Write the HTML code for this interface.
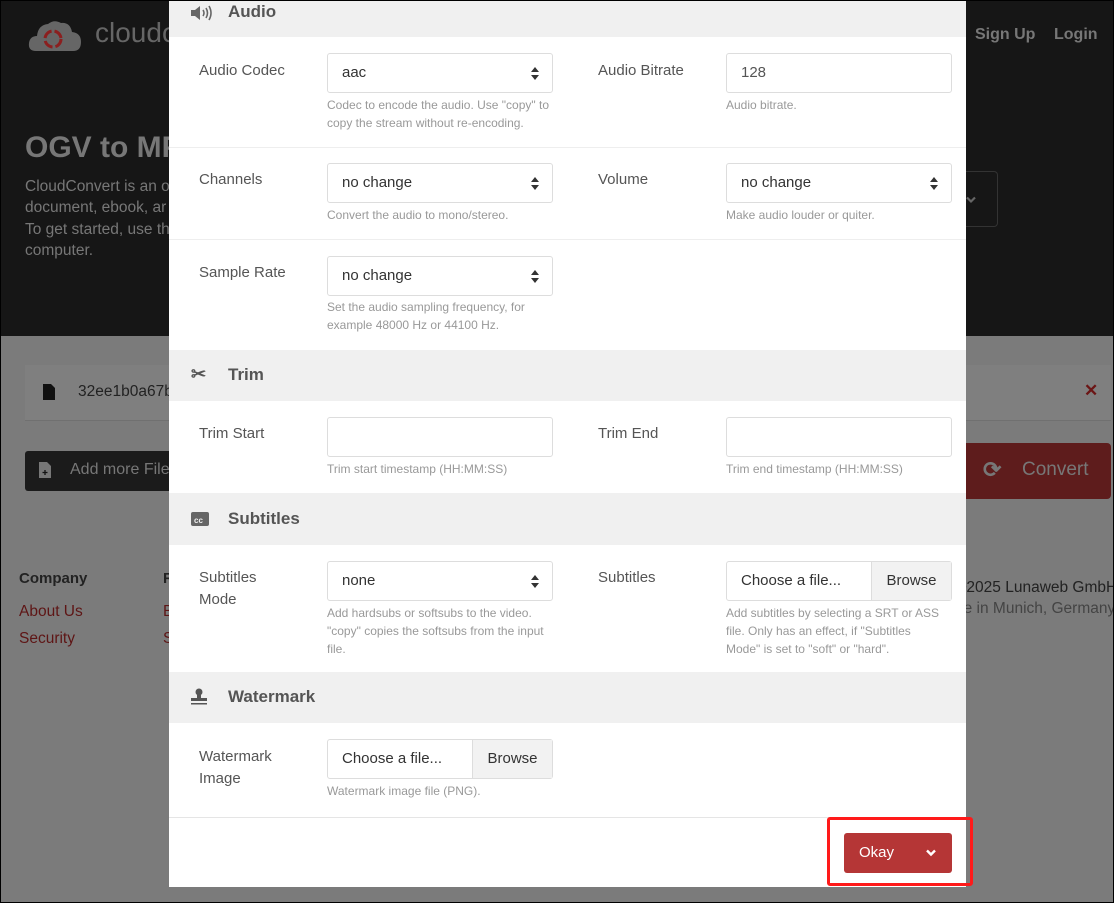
<!DOCTYPE html>
<html><head><meta charset="utf-8"><style>
*{box-sizing:border-box;margin:0;padding:0}
body{width:1114px;height:903px;position:relative;overflow:hidden;font-family:"Liberation Sans",sans-serif;background:#7b7b7b}
.a{position:absolute}
.top{left:0;top:0;width:1114px;height:336px;background:#161616}
.m{left:169px;top:0;width:797px;height:887px;background:#fff}
.hd{left:0;width:797px;background:#f0f0f0;color:#555;font-weight:bold;font-size:17px}
.hd span{position:absolute;left:59px}
.lb{font-size:15px;color:#555;line-height:22px}
.in{height:40px;border:1px solid #ddd;border-radius:3px;font-size:15px;color:#333;padding:0 14px;line-height:38px;background:#fff}
.sel::after{content:"";position:absolute;right:13px;top:13px;border:4px solid transparent;border-bottom:5px solid #333;border-top:0}
.sel::before{content:"";position:absolute;right:13px;top:21px;border:4px solid transparent;border-top:5px solid #333;border-bottom:0}
.hp{font-size:12px;color:#999;line-height:18px;width:226px}
.ln{height:1px;background:#eee}
.br{position:absolute;right:0;top:0;height:38px;width:80px;background:#f2f2f2;border-left:1px solid #ddd;text-align:center}
</style></head><body>
<div class="a top"></div>
<svg class="a" style="left:28px;top:19px" width="54" height="34" viewBox="0 0 54 34"><path d="M8 32 Q0 32 1 24 Q2 17 9 17 Q10 6 20 5 Q26 0 33 4 Q42 3 44 13 Q53 14 53 23 Q53 32 45 32Z" fill="#666"/><circle cx="25" cy="20" r="8" fill="none" stroke="#8b1f1f" stroke-width="3" stroke-dasharray="10 3"/></svg>
<div class="a" style="left:95px;top:17px;font-size:28px;color:#666">cloudc</div>
<div class="a" style="left:975px;top:26px;font-size:16px;font-weight:bold;color:#777">Sign Up</div>
<div class="a" style="left:1054px;top:26px;font-size:16px;font-weight:bold;color:#777">Login</div>
<div class="a" style="left:25px;top:131px;font-size:30px;font-weight:bold;color:#777">OGV to MP</div>
<div class="a" style="left:25px;top:176px;font-size:15.5px;color:#777;line-height:21.3px">CloudConvert is an o<br>document, ebook, ar<br>To get started, use th<br>computer.</div>
<div class="a" style="left:960px;top:171px;width:38px;height:56px;border:1px solid #333;border-left:0;border-radius:0 4px 4px 0"></div>
<svg class="a" style="left:966px;top:196px" width="10" height="8"><path d="M1 1.5L5 5.5L9 1.5" stroke="#666" stroke-width="2.2" fill="none"/></svg>
<div class="a" style="left:25px;top:365px;width:1086px;height:56px;background:#7f7f7f;border-bottom:1px solid #707070"></div>
<svg class="a" style="left:43px;top:384px" width="12" height="16"><path d="M0 0H8L12 4V16H0Z" fill="#111"/></svg>
<div class="a" style="left:78px;top:383px;font-size:15.5px;color:#222">32ee1b0a67b</div>
<div class="a" style="left:1084px;top:381px;font-size:17px;color:#6b1515;font-weight:bold">✕</div>
<div class="a" style="left:25px;top:451px;width:160px;height:40px;background:#1b1b1b;border-radius:3px"></div>
<svg class="a" style="left:39px;top:462px" width="12" height="16"><path d="M0 0H8L12 4V16H0Z" fill="#777"/><path d="M6 8V13M3.5 10.5H8.5" stroke="#111" stroke-width="1.3"/></svg>
<div class="a" style="left:70px;top:461px;font-size:16px;color:#777">Add more Files</div>
<div class="a" style="left:950px;top:443px;width:161px;height:56px;background:#5e1c1c;border-radius:4px"></div>
<div class="a" style="left:983px;top:457px;font-size:22px;color:#777;font-weight:bold">⟳</div>
<div class="a" style="left:1022px;top:459px;font-size:19px;color:#777">Convert</div>
<div class="a" style="left:19px;top:570px;font-size:15px;font-weight:bold;color:#222">Company</div>
<div class="a" style="left:163px;top:570px;font-size:15px;font-weight:bold;color:#222">R</div>
<div class="a" style="left:19px;top:598px;font-size:15.5px;color:#5e1515;line-height:27px">About Us<br>Security</div>
<div class="a" style="left:163px;top:598px;font-size:15.5px;color:#5e1515;line-height:27px">B<br>S</div>
<div class="a" style="left:955px;top:577px;font-size:15.5px;color:#222;line-height:21px;white-space:nowrap">©2025 Lunaweb GmbH<br><span style="color:#444">de in Munich, Germany</span></div>

<div class="a m">
<div class="a hd" style="top:0;height:37px"><svg class="a" style="left:22px;top:5px" width="22" height="16" viewBox="0 0 22 16"><path d="M0 5H4L9 1V15L4 11H0Z" fill="#666"/><path d="M12 5Q14 8 12 11M15 3Q18 8 15 13M18 1Q22 8 18 15" stroke="#666" stroke-width="1.6" fill="none"/></svg><span style="top:2px">Audio</span></div>
<div class="a lb" style="left:30px;top:60px">Audio Codec</div>
<div class="a in sel" style="left:158px;top:53px;width:226px">aac</div>
<div class="a hp" style="left:158px;top:96px;width:222px">Codec to encode the audio. Use "copy" to copy the stream without re-encoding.</div>
<div class="a lb" style="left:429px;top:60px">Audio Bitrate</div>
<div class="a in" style="left:557px;top:53px;width:226px;color:#555">128</div>
<div class="a hp" style="left:557px;top:96px">Audio bitrate.</div>
<div class="a ln" style="left:0;top:147px;width:797px"></div>
<div class="a lb" style="left:30px;top:169px">Channels</div>
<div class="a in sel" style="left:158px;top:163px;width:226px">no change</div>
<div class="a hp" style="left:158px;top:206px">Convert the audio to mono/stereo.</div>
<div class="a lb" style="left:429px;top:169px">Volume</div>
<div class="a in sel" style="left:557px;top:163px;width:226px">no change</div>
<div class="a hp" style="left:557px;top:206px">Make audio louder or quiter.</div>
<div class="a ln" style="left:0;top:239px;width:797px"></div>
<div class="a lb" style="left:30px;top:262px">Sample Rate</div>
<div class="a in sel" style="left:158px;top:256px;width:226px">no change</div>
<div class="a hp" style="left:158px;top:298px">Set the audio sampling frequency, for example 48000 Hz or 44100 Hz.</div>
<div class="a hd" style="top:350px;height:51px"><span style="left:22px;top:14px;font-size:18px">✂</span><span style="top:15px">Trim</span></div>
<div class="a lb" style="left:30px;top:423px">Trim Start</div>
<div class="a in" style="left:158px;top:417px;width:226px"></div>
<div class="a hp" style="left:158px;top:460px">Trim start timestamp (HH:MM:SS)</div>
<div class="a lb" style="left:429px;top:423px">Trim End</div>
<div class="a in" style="left:557px;top:417px;width:226px"></div>
<div class="a hp" style="left:557px;top:460px">Trim end timestamp (HH:MM:SS)</div>
<div class="a hd" style="top:493px;height:52px"><svg class="a" style="left:22px;top:19px" width="18" height="14"><rect width="18" height="14" rx="2" fill="#666"/><text x="3" y="11" font-size="8" font-weight="bold" fill="#f0f0f0" font-family="Liberation Sans">cc</text></svg><span style="top:16px">Subtitles</span></div>
<div class="a lb" style="left:30px;top:567px">Subtitles<br>Mode</div>
<div class="a in sel" style="left:158px;top:561px;width:226px">none</div>
<div class="a hp" style="left:158px;top:604px;width:222px">Add hardsubs or softsubs to the video. "copy" copies the softsubs from the input file.</div>
<div class="a lb" style="left:429px;top:567px">Subtitles</div>
<div class="a in" style="left:557px;top:561px;width:226px">Choose a file...<div class="br">Browse</div></div>
<div class="a hp" style="left:557px;top:604px;width:222px">Add subtitles by selecting a SRT or ASS file. Only has an effect, if "Subtitles Mode" is set to "soft" or "hard".</div>
<div class="a hd" style="top:672px;height:51px"><svg class="a" style="left:22px;top:16px" width="16" height="17"><circle cx="8" cy="4" r="3.5" fill="#555"/><rect x="6" y="6" width="4" height="5" fill="#555"/><rect x="0" y="10" width="16" height="3" fill="#555"/><rect x="0" y="15" width="16" height="1.5" fill="#555"/></svg><span style="top:15px">Watermark</span></div>
<div class="a lb" style="left:30px;top:746px">Watermark<br>Image</div>
<div class="a in" style="left:158px;top:739px;width:226px">Choose a file...<div class="br">Browse</div></div>
<div class="a hp" style="left:158px;top:782px">Watermark image file (PNG).</div>
<div class="a ln" style="left:0;top:817px;width:797px;background:#e5e5e5"></div>
<div class="a" style="left:675px;top:833px;width:108px;height:40px;background:#b53636;border-radius:3px;color:#fff;font-size:15px;line-height:40px;padding-left:15px">Okay<svg class="a" style="right:16px;top:16px" width="10" height="8"><path d="M1 1.5L5 5.5L9 1.5" stroke="#fff" stroke-width="2.4" fill="none"/></svg></div>
</div>
<div class="a" style="left:827px;top:817px;width:146px;height:69px;border:3px solid #ff1a1a;border-radius:3px"></div>
<div class="a" style="left:0;top:0;width:1114px;height:903px;border:1px solid #000;pointer-events:none"></div>
</body></html>
